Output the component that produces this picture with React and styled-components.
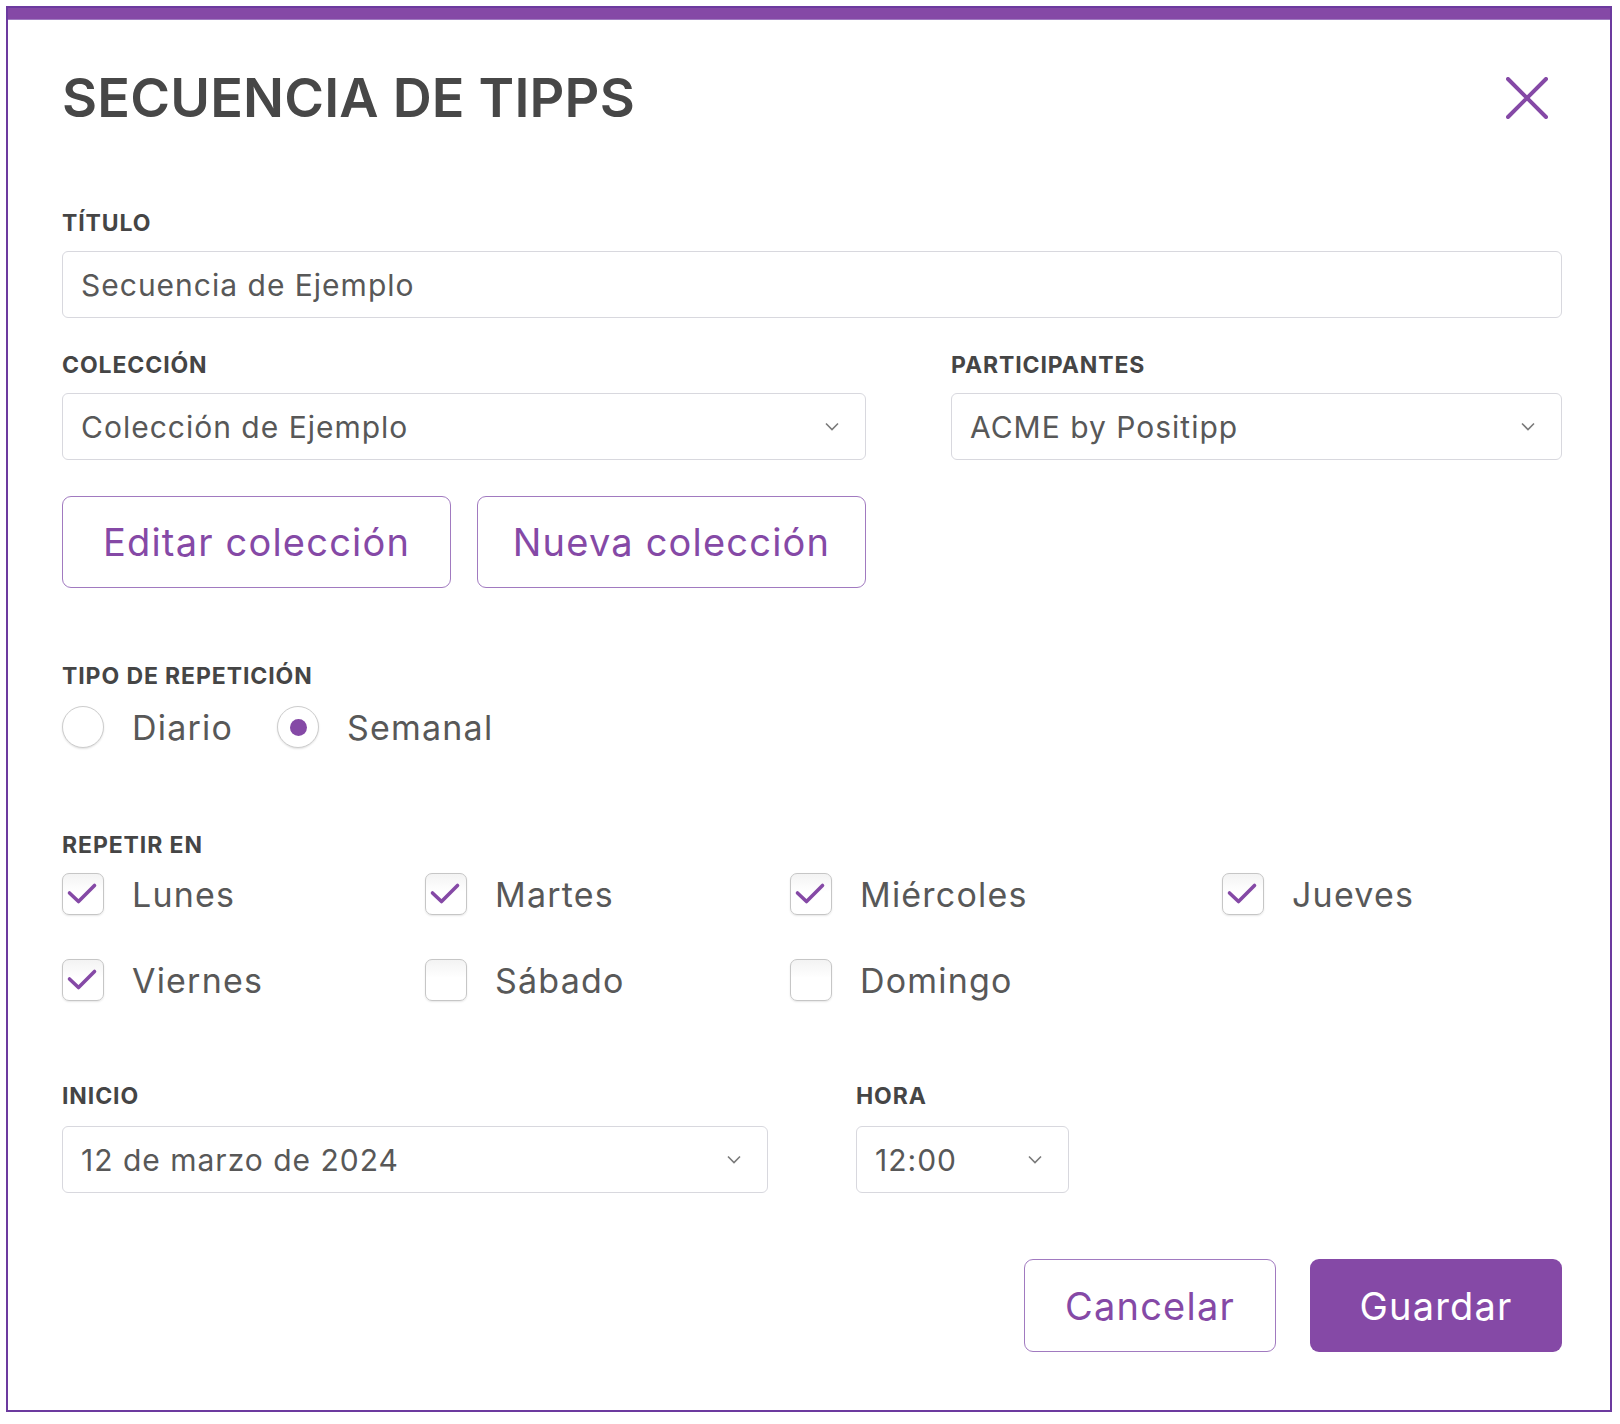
import React, { useState } from "react";
import styled, { createGlobalStyle } from "styled-components";

const purple = "#8549a6";
const textGray = "#585858";
const labelGray = "#454545";

const GlobalStyle = createGlobalStyle`
  * { box-sizing: border-box; }
  body {
    margin: 0;
    background: #ffffff;
    font-family: Inter, "Noto Sans", sans-serif;
    color: ${textGray};
  }
`;

const Page = styled.div`
  padding: 6px 8px 10px 6px;
`;

const Frame = styled.div`
  border: 2px solid #6c3a9f;
  height: 1406px;
  display: flex;
  flex-direction: column;
`;

const TopBar = styled.div`
  height: 12px;
  background: ${purple};
  border-bottom: 1px solid #a07cc0;
`;

const Body = styled.div`
  padding: 51px 48px 0 54px;
  display: flex;
  flex-direction: column;
`;

const Header = styled.div`
  display: flex;
  align-items: center;
  justify-content: space-between;
  padding-right: 14px;
`;

const Title = styled.h1`
  margin: 0;
  font-size: 54px;
  line-height: 54px;
  font-weight: 600;
  color: #474747;
  letter-spacing: 0.2px;
`;

const CloseButton = styled.button`
  width: 42px;
  height: 42px;
  padding: 0;
  border: none;
  background: none;
  cursor: pointer;
  display: flex;
`;

const Field = styled.div`
  display: flex;
  flex-direction: column;
  margin-top: ${(p) => p.$top || 0}px;
`;

const Label = styled.label`
  font-size: 23px;
  line-height: 22px;
  font-weight: 700;
  color: ${labelGray};
  margin-bottom: ${(p) => p.$gap || 17}px;
  letter-spacing: 0.9px;
`;

const Box = styled.div`
  position: relative;
  height: 67px;
  width: ${(p) => (p.$width ? `${p.$width}px` : "100%")};
  border: 1px solid #d8d8de;
  border-radius: 6px;
  background: #fff;
  display: flex;
  align-items: center;
  padding: 0 18px;
  font-size: 30px;
  letter-spacing: 1px;
  color: ${textGray};
`;

const Chevron = styled.svg`
  position: absolute;
  right: 26px;
  top: 50%;
  margin-top: -5px;
`;

const Row = styled.div`
  display: flex;
  gap: ${(p) => p.$gap || 0}px;
  margin-top: ${(p) => p.$top || 0}px;
`;

const Col = styled.div`
  width: ${(p) => p.$width}px;
  display: flex;
  flex-direction: column;
`;

const OutlineButton = styled.button`
  width: ${(p) => p.$width}px;
  height: ${(p) => p.$height}px;
  border: 1.5px solid #a17ac0;
  border-radius: 9px;
  background: #fff;
  color: ${purple};
  font-family: inherit;
  font-size: 38px;
  letter-spacing: 1.2px;
  cursor: pointer;
`;

const SolidButton = styled(OutlineButton)`
  border: none;
  background: ${purple};
  color: #fff;
`;

const RadioGroup = styled.div`
  display: flex;
  gap: 44px;
`;

const Option = styled.div`
  display: flex;
  align-items: center;
  gap: 28px;
  font-size: 34px;
  letter-spacing: 1.2px;
  color: ${textGray};
`;

const RadioCircle = styled.span`
  width: 42px;
  height: 42px;
  border-radius: 50%;
  border: 1.5px solid #cdcdcd;
  background: #fff;
  box-shadow: 0 1px 2px rgba(0, 0, 0, 0.12);
  display: flex;
  align-items: center;
  justify-content: center;
  &::after {
    content: "";
    width: 17px;
    height: 17px;
    border-radius: 50%;
    background: ${purple};
    display: ${(p) => (p.$checked ? "block" : "none")};
  }
`;

const CheckBox = styled.span`
  width: 42px;
  height: 42px;
  border-radius: 7px;
  border: 1.5px solid #c6c6c6;
  background: linear-gradient(#f3f3f3, #ffffff 45%);
  box-shadow: 0 1px 2px rgba(0, 0, 0, 0.1);
  display: flex;
`;

const DayGrid = styled.div`
  display: grid;
  grid-template-columns: 363px 365px 432px 1fr;
  row-gap: 44px;
`;

const Footer = styled.div`
  display: flex;
  justify-content: flex-end;
  gap: 34px;
  margin-top: 66px;
`;

const ChevronIcon = () => (
  <Chevron width="14" height="9" viewBox="0 0 14 9">
    <polyline points="1,1.5 7,7.5 13,1.5" fill="none" stroke="#7a7a7a" strokeWidth="1.6" />
  </Chevron>
);

const Select = ({ value, width }) => (
  <Box $width={width}>
    {value}
    <ChevronIcon />
  </Box>
);

const days = [
  ["Lunes", true],
  ["Martes", true],
  ["Miércoles", true],
  ["Jueves", true],
  ["Viernes", true],
  ["Sábado", false],
  ["Domingo", false],
];

export default function App() {
  const [mode, setMode] = useState("semanal");

  return (
    <Page>
      <GlobalStyle />
      <Frame>
        <TopBar />
        <Body>
          <Header>
            <Title>SECUENCIA DE TIPPS</Title>
            <CloseButton aria-label="Cerrar">
              <svg width="42" height="42" viewBox="0 0 42 42">
                <path d="M2 2 L40 40 M40 2 L2 40" stroke={purple} strokeWidth="4" strokeLinecap="round" />
              </svg>
            </CloseButton>
          </Header>

          <Field $top={87}>
            <Label>TÍTULO</Label>
            <Box>Secuencia de Ejemplo</Box>
          </Field>

          <Row $gap={85} $top={36}>
            <Col $width={804}>
              <Label>COLECCIÓN</Label>
              <Select value="Colección de Ejemplo" />
            </Col>
            <Col $width={611}>
              <Label>PARTICIPANTES</Label>
              <Select value="ACME by Positipp" />
            </Col>
          </Row>

          <Row $gap={26} $top={36}>
            <OutlineButton $width={389} $height={92}>Editar colección</OutlineButton>
            <OutlineButton $width={389} $height={92}>Nueva colección</OutlineButton>
          </Row>

          <Field $top={77}>
            <Label $gap={19}>TIPO DE REPETICIÓN</Label>
            <RadioGroup>
              <Option onClick={() => setMode("diario")}>
                <RadioCircle $checked={mode === "diario"} />
                Diario
              </Option>
              <Option onClick={() => setMode("semanal")}>
                <RadioCircle $checked={mode === "semanal"} />
                Semanal
              </Option>
            </RadioGroup>
          </Field>

          <Field $top={86}>
            <Label>REPETIR EN</Label>
            <DayGrid>
              {days.map(([name, checked]) => (
                <Option key={name}>
                  <CheckBox>
                    {checked && (
                      <svg width="39" height="39" viewBox="0 0 39 39">
                        <polyline points="6.5,19 15.5,27.5 31.5,11.5" fill="none" stroke={purple} strokeWidth="3.6" strokeLinecap="round" strokeLinejoin="round" />
                      </svg>
                    )}
                  </CheckBox>
                  {name}
                </Option>
              ))}
            </DayGrid>
          </Field>

          <Row $gap={88} $top={84}>
            <Col $width={706}>
              <Label $gap={19}>INICIO</Label>
              <Select value="12 de marzo de 2024" />
            </Col>
            <Col $width={213}>
              <Label $gap={19}>HORA</Label>
              <Select value="12:00" />
            </Col>
          </Row>

          <Footer>
            <OutlineButton $width={252} $height={93}>Cancelar</OutlineButton>
            <SolidButton $width={252} $height={93}>Guardar</SolidButton>
          </Footer>
        </Body>
      </Frame>
    </Page>
  );
}
